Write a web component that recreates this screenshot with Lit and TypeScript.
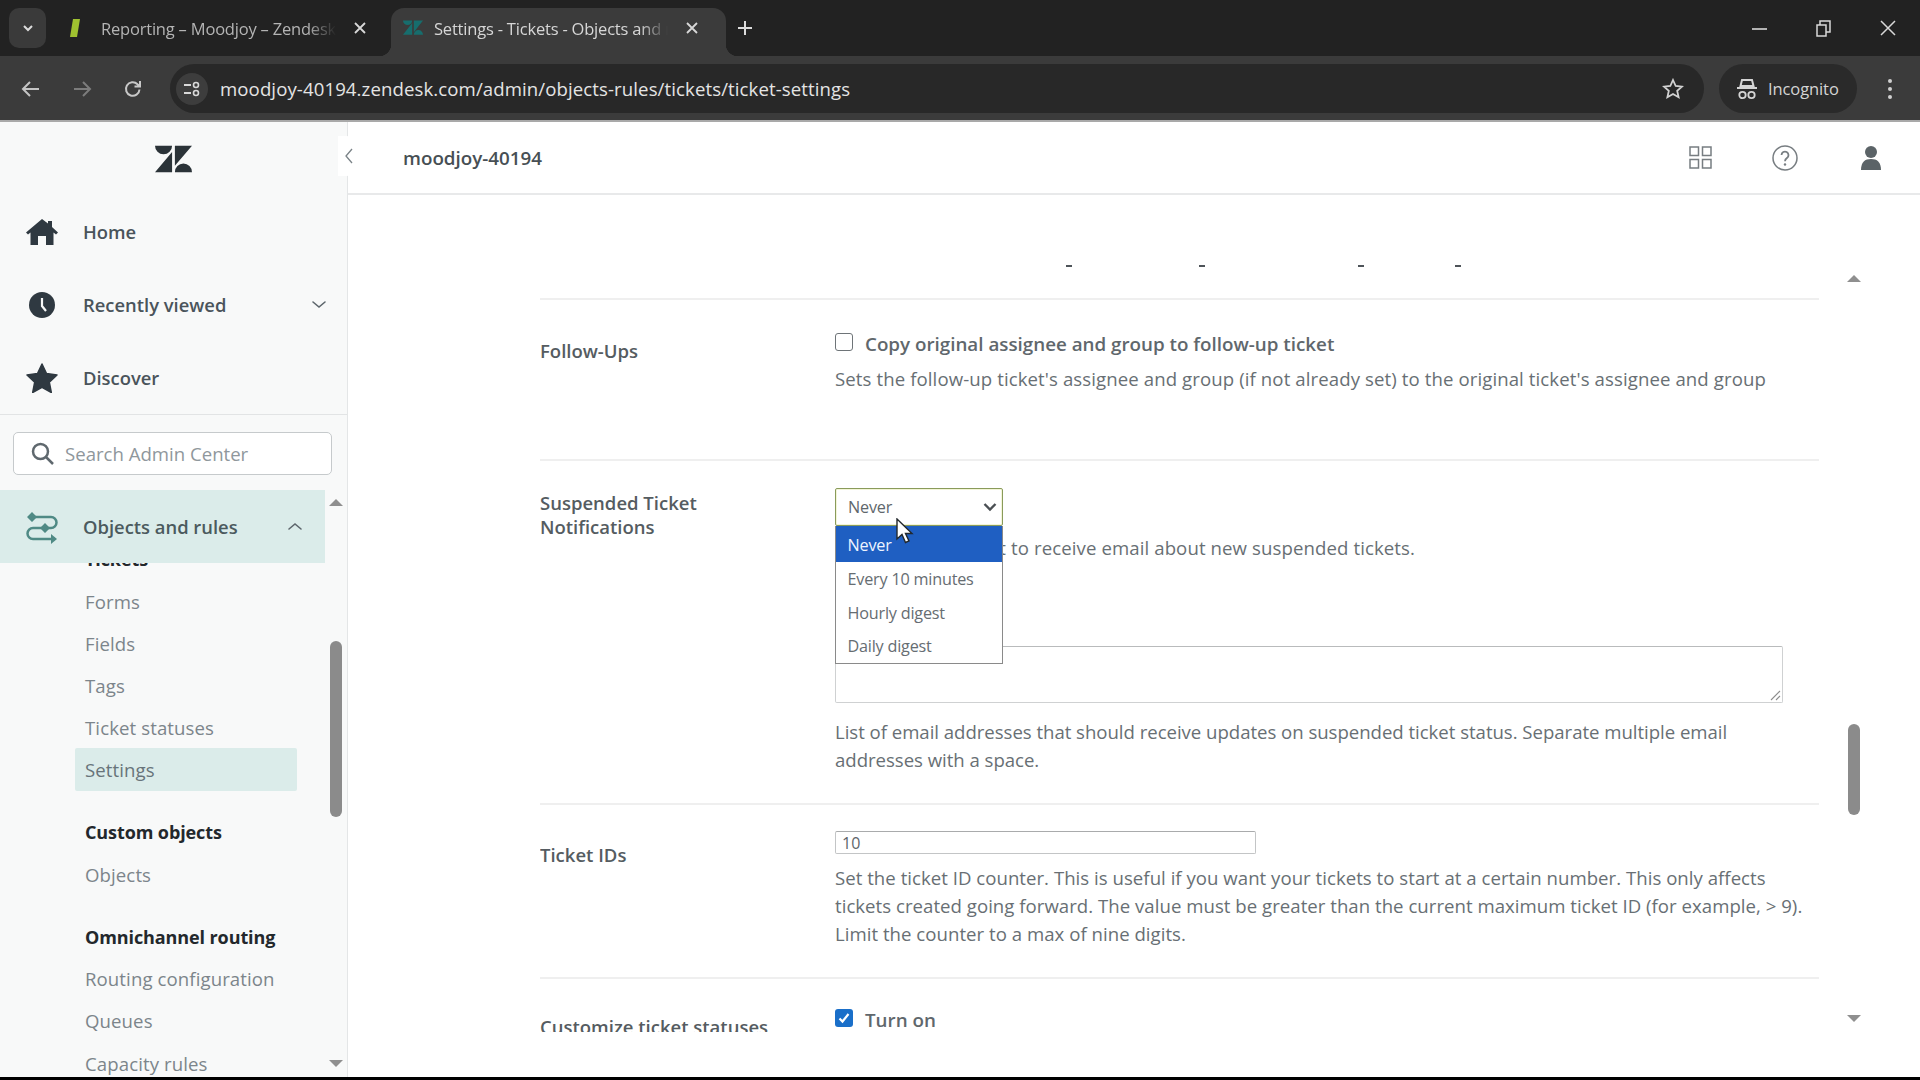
import { LitElement, html, css, svg } from 'lit';
import { customElement } from 'lit/decorators.js';

const chevronDown = svg`<path d="M3 6l6 5 6-5" fill="none" stroke="currentColor" stroke-width="1.6" stroke-linecap="round"/>`;
const chevronUp = svg`<path d="M3 11l6-5 6 5" fill="none" stroke="currentColor" stroke-width="1.6" stroke-linecap="round"/>`;

@customElement('app-root')
export class AppRoot extends LitElement {
  static styles = css`
    :host {
      display: block;
      width: 1920px;
      height: 1080px;
      overflow: hidden;
      background: #000;
      font-family: 'Open Sans', 'Noto Sans', sans-serif;
      color: #5a6268;
    }
    svg { display: block; flex: none; }

    /* browser chrome */
    .tabstrip {
      height: 56px;
      background: #222222;
      display: flex;
      align-items: flex-end;
      box-sizing: border-box;
      color: #dcdcdc;
    }
    .tabs-btn {
      width: 37px;
      height: 40px;
      margin: 0 0 8px 9px;
      background: #3a3a3a;
      border-radius: 10px;
      display: flex;
      align-items: center;
      justify-content: center;
    }
    .tab {
      height: 48px;
      display: flex;
      align-items: center;
      position: relative;
      box-sizing: border-box;
      padding-bottom: 8px;
      font-size: 16.5px;
      letter-spacing: -0.2px;
    }
    .tab.first { width: 344px; margin-left: 1px; padding-left: 22px; color: #b4b4b4; }
    .tab.active { width: 335px; padding-left: 12px; background: #3b3b3b; border-radius: 13px 13px 0 0; color: #d6d6d6; }
    .tab.active::before, .tab.active::after {
      content: '';
      position: absolute;
      bottom: 0;
      width: 12px;
      height: 12px;
    }
    .tab.active::before { left: -12px; background: radial-gradient(circle at 0 0, #222222 12px, #3b3b3b 12.5px); }
    .tab.active::after { right: -12px; background: radial-gradient(circle at 100% 0, #222222 12px, #3b3b3b 12.5px); }
    .tab .title {
      overflow: hidden;
      white-space: nowrap;
      -webkit-mask-image: linear-gradient(to right, #000 88%, transparent);
      mask-image: linear-gradient(to right, #000 88%, transparent);
    }
    .tab.first .title { width: 235px; margin-left: 20px; }
    .tab.active .title { width: 234px; margin-left: 11px; }
    .tab .close { margin-left: 17px; color: #d8d8d8; }
    .plus { margin: 0 0 20px 11px; color: #dcdcdc; }
    .window-controls { margin-left: auto; display: flex; align-items: center; height: 56px; padding-right: 24px; gap: 49px; color: #d8d8d8; }
    .toolbar {
      height: 66px;
      background: #3b3b3b;
      border-bottom: 2px solid #a9a9a9;
      box-sizing: border-box;
      display: flex;
      align-items: flex-start;
      padding-top: 8px;
      color: #c8c8c8;
    }
    .nav-btns { display: flex; align-items: center; height: 49px; gap: 31px; padding-left: 21px; width: 170px; box-sizing: border-box; }
    .omnibox {
      width: 1534px;
      height: 49px;
      background: #282828;
      border-radius: 25px;
      display: flex;
      align-items: center;
      box-sizing: border-box;
      padding-left: 6px;
      color: #e4e4e4;
    }
    .site-icon { width: 32px; height: 32px; border-radius: 16px; background: #3d3d3d; display: flex; align-items: center; justify-content: center; margin-right: 12px; }
    .url { font-size: 18.6px; letter-spacing: 0.1px; white-space: nowrap; }
    .url-star { margin-left: auto; margin-right: 20px; color: #d2d2d2; }
    .incognito {
      width: 138px;
      height: 49px;
      margin-left: 15px;
      border-radius: 25px;
      background: #2a2a2a;
      display: flex;
      align-items: center;
      padding-left: 18px;
      box-sizing: border-box;
      gap: 11px;
      font-size: 16.5px;
      letter-spacing: -0.1px;
      color: #d4d4d4;
    }
    .menu-dots { margin-left: 30px; height: 49px; display: flex; align-items: center; color: #d0d0d0; }

    /* page */
    .page { display: flex; height: 955px; background: #fff; }
    .sidebar {
      width: 348px;
      flex: none;
      background: #f8f9f9;
      border-right: 1px solid #e4e6e7;
      box-sizing: border-box;
      display: flex;
      flex-direction: column;
    }
    .logo-row { height: 73px; display: flex; align-items: center; justify-content: center; padding: 1px 1px 0 0; box-sizing: border-box; }
    .nav-item {
      height: 73px;
      display: flex;
      align-items: center;
      padding-left: 26px;
      padding-right: 19px;
      font-size: 18.4px;
      font-weight: 600;
      color: #4a545b;
      box-sizing: border-box;
    }
    .nav-item .label { margin-left: 25px; }
    .nav-item .caret { margin-left: auto; color: #5d666c; }
    .divider { height: 1px; background: #e2e4e5; }
    .search-wrap { padding: 17px 15px 15px 13px; }
    .search {
      height: 43px;
      background: #fff;
      border: 1.5px solid #c6cacc;
      border-radius: 5px;
      box-sizing: border-box;
      display: flex;
      align-items: center;
      padding-left: 17px;
      gap: 11px;
      font-size: 18.6px;
      color: #8f979c;
    }
    .side-lower { flex: 1; display: flex; min-height: 0; }
    .side-col { width: 325px; flex: none; display: flex; flex-direction: column; min-height: 0; }
    .nav-item.current { height: 73px; background: #dbecea; padding-right: 21px; color: #4b5a5e; flex: none; }
    .sublist { flex: 1; overflow: hidden; min-height: 0; }
    .subinner { margin-top: -25px; padding-left: 75px; }
    .sub {
      height: 42.1px;
      width: 222px;
      display: flex;
      align-items: center;
      padding-left: 10px;
      box-sizing: border-box;
      font-size: 18.6px;
      letter-spacing: 0.1px;
      color: #7c858b;
      border-radius: 2px;
    }
    .sub.head { font-size: 18px; font-weight: 700; color: #23282c; letter-spacing: -0.1px; }
    .sub.on { background: #dbecea; color: #68747a; }
    .sub.gap { margin-top: 20.5px; }
    .side-scroll { width: 22px; display: flex; flex-direction: column; align-items: center; box-sizing: border-box; }
    .thumb { width: 12px; background: #8b8b8b; border-radius: 6px; }
    .arrow-up { width: 0; height: 0; border-left: 7px solid transparent; border-right: 7px solid transparent; border-bottom: 7px solid #8f8f8f; }
    .arrow-down { width: 0; height: 0; border-left: 7px solid transparent; border-right: 7px solid transparent; border-top: 7px solid #8f8f8f; }

    .main { flex: 1; display: flex; flex-direction: column; min-width: 0; position: relative; }
    .collapse {
      position: absolute;
      left: -10px;
      top: 14px;
      width: 22px;
      height: 40px;
      border-radius: 0 14px 14px 0;
      background: #fff;
      display: flex;
      align-items: center;
      justify-content: center;
      color: #7a8287;
    }
    .topbar {
      height: 73px;
      border-bottom: 2px solid #e8e9ea;
      box-sizing: border-box;
      display: flex;
      align-items: center;
      padding-left: 55px;
      color: #777d81;
    }
    .brand { font-size: 18.8px; font-weight: 600; color: #474f54; }
    .top-icons { margin-left: auto; display: flex; align-items: center; gap: 60px; padding-right: 38px; }
    .top-icons .user { margin-left: 2px; }
    .content { flex: 1; display: flex; padding: 70px 0 0 192px; min-height: 0; }
    .form { width: 1279px; height: 767px; overflow: hidden; flex: none; }
    .row {
      display: grid;
      grid-template-columns: 295px 1fr;
      border-top: 2px solid #efefef;
      box-sizing: border-box;
    }
    .clipped-line { height: 33px; display: flex; align-items: flex-start; }
    .clipped-line i { display: block; width: 6px; height: 2px; background: #4e5459; }
    .row-label { font-size: 18.5px; font-weight: 600; line-height: 24px; color: #555c61; }
    .desc { font-size: 18.6px; line-height: 28px; letter-spacing: 0.1px; color: #686f74; white-space: nowrap; margin: 0; }
    .check-line { display: flex; align-items: center; height: 24px; gap: 12px; font-size: 18.8px; font-weight: 600; color: #60676c; }
    .box { width: 18px; height: 18px; border: 1.5px solid #6e7478; border-radius: 3px; box-sizing: border-box; background: #fff; flex: none; margin-top: -4px; }
    .box.on { background: #1a6fc9; border: none; display: flex; align-items: center; justify-content: center; }

    .follow { padding: 32px 0 0; height: 161px; }
    .follow .row-label { margin-top: 7px; }
    .follow .desc { margin-top: 9px; }
    .suspended { padding: 27px 0 29px; }
    .suspended .row-label { margin-top: 3px; }
    .select-wrap { position: relative; width: 168px; height: 38px; }
    .select {
      height: 38px;
      border: 1.5px solid #8a9b5a;
      box-shadow: 0 0 0 1px #f3f5d8 inset;
      border-radius: 2px;
      box-sizing: border-box;
      display: flex;
      align-items: center;
      justify-content: space-between;
      padding: 0 5px 0 12px;
      font-size: 16.2px;
      letter-spacing: -0.2px;
      color: #60676c;
      background: #fff;
    }
    .options {
      position: absolute;
      left: 0;
      top: 38px;
      width: 168px;
      height: 138px;
      border: 1px solid #8a8a8a;
      border-top: none;
      box-sizing: border-box;
      background: #fff;
      z-index: 2;
      font-size: 16.2px;
      letter-spacing: -0.2px;
      color: #666d72;
    }
    .option { height: 33.7px; display: flex; align-items: center; padding-left: 11.5px; }
    .option.selected { height: 36px; padding-top: 1px; box-sizing: border-box; background: #1f5fc2; color: #eef4ff; }
    .cursor { position: absolute; left: 61px; top: 30px; z-index: 3; }
    .suspended .desc.first { margin-top: 8px; }
    .textarea {
      margin: 84px 0 0;
      width: 948px;
      height: 57px;
      border: 1.5px solid #cfd1d2;
      border-top-color: #b9bbbc;
      border-radius: 2px;
      box-sizing: border-box;
      display: flex;
      align-items: flex-end;
      justify-content: flex-end;
      padding: 0 1px 1px 0;
      color: #8d8d8d;
    }
    .suspended .desc.last { margin-top: 15px; letter-spacing: -0.03px; }
    .ids { padding: 26px 0 29px; }
    .ids .row-label { margin-top: 12px; }
    .input {
      width: 421px;
      height: 23px;
      border: 1.5px solid #c3c5c6;
      border-top-color: #a9abac;
      border-radius: 2px;
      box-sizing: border-box;
      display: flex;
      align-items: center;
      padding-left: 6px;
      font-size: 16px;
      color: #5e656a;
    }
    .ids .desc { margin-top: 10px; letter-spacing: 0.03px; }
    .statuses { padding: 29px 0 0; }
    .statuses .row-label { margin-top: 7px; }
    .scroll-col { margin-left: 29px; width: 12px; display: flex; flex-direction: column; align-items: center; }
  `;

  private subItem(label: string, cls = '') {
    return html`<div class="sub ${cls}">${label}</div>`;
  }

  render() {
    return html`
      <div class="tabstrip">
        <div class="tabs-btn">
          <svg width="14" height="14" viewBox="0 0 14 14"><path d="M3 5l4 4 4-4" fill="none" stroke="#dcdcdc" stroke-width="2"/></svg>
        </div>
        <div class="tab first">
          <svg width="12" height="20" viewBox="0 0 12 20"><path d="M4 1h7L8 19H1z" fill="#9fc130"/></svg>
          <span class="title">Reporting – Moodjoy – Zendesk</span>
          <svg class="close" width="14" height="14" viewBox="0 0 14 14"><path d="M2 2l10 10M12 2L2 12" stroke="currentColor" stroke-width="1.8"/></svg>
        </div>
        <div class="tab active">
          <svg width="20" height="18" viewBox="0 0 24 20"><path d="M11 4v14H0zM11 1a5.500 5.500 0 0 1-11 0zM13 18a5.500 5.500 0 0 1 11 0zM13 15V1h11z" fill="#176d6d"/></svg>
          <span class="title">Settings - Tickets - Objects and rules</span>
          <svg class="close" width="14" height="14" viewBox="0 0 14 14"><path d="M2 2l10 10M12 2L2 12" stroke="currentColor" stroke-width="1.8"/></svg>
        </div>
        <svg class="plus" width="16" height="16" viewBox="0 0 16 16"><path d="M8 1v14M1 8h14" stroke="currentColor" stroke-width="2"/></svg>
        <div class="window-controls">
          <svg width="15" height="15" viewBox="0 0 15 15"><path d="M0 8h15" stroke="currentColor" stroke-width="1.6"/></svg>
          <svg width="15" height="17" viewBox="0 0 15 17"><path d="M1 5h9v11H1zM4 5V1h10v11h-4" fill="none" stroke="currentColor" stroke-width="1.5"/></svg>
          <svg width="16" height="16" viewBox="0 0 16 16"><path d="M1 1l14 14M15 1L1 15" stroke="currentColor" stroke-width="1.5"/></svg>
        </div>
      </div>
      <div class="toolbar">
        <div class="nav-btns">
          <svg width="20" height="20" viewBox="0 0 20 20"><path d="M18 10H3M9 3l-7 7 7 7" fill="none" stroke="#c4c4c4" stroke-width="2"/></svg>
          <svg width="20" height="20" viewBox="0 0 20 20"><path d="M2 10h15M11 3l7 7-7 7" fill="none" stroke="#7c7c7c" stroke-width="2"/></svg>
          <svg width="20" height="20" viewBox="0 0 20 20"><path d="M16.500 10.500a6.800 6.800 0 1 1-2-5.300L17 7.500M17 2v5.500h-5.500" fill="none" stroke="#c8c8c8" stroke-width="2"/></svg>
        </div>
        <div class="omnibox">
          <div class="site-icon">
            <svg width="18" height="18" viewBox="0 0 18 18"><path d="M1 5h7M1 13h7" stroke="#d8d8d8" stroke-width="2"/><circle cx="13" cy="5" r="2.500" fill="none" stroke="#d8d8d8" stroke-width="1.600"/><circle cx="13" cy="13" r="2.500" fill="none" stroke="#d8d8d8" stroke-width="1.600"/></svg>
          </div>
          <span class="url">moodjoy-40194.zendesk.com/admin/objects-rules/tickets/ticket-settings</span>
          <svg class="url-star" width="22" height="22" viewBox="0 0 22 22"><path d="M11 2l2.700 6 6.300.6-4.800 4.300 1.400 6.400L11 16l-5.600 3.300 1.400-6.400L2 8.600 8.300 8z" fill="none" stroke="currentColor" stroke-width="1.800"/></svg>
        </div>
        <div class="incognito">
          <svg width="20" height="22" viewBox="0 0 20 22"><path d="M5 2h10l1.500 6h-13zM0 10h20" fill="none" stroke="#d4d4d4" stroke-width="2"/><circle cx="5.500" cy="17" r="3.200" fill="none" stroke="#d4d4d4" stroke-width="1.800"/><circle cx="14.500" cy="17" r="3.200" fill="none" stroke="#d4d4d4" stroke-width="1.800"/></svg>
          <span>Incognito</span>
        </div>
        <div class="menu-dots">
          <svg width="6" height="22" viewBox="0 0 6 22"><circle cx="3" cy="3" r="2" fill="currentColor"/><circle cx="3" cy="11" r="2" fill="currentColor"/><circle cx="3" cy="19" r="2" fill="currentColor"/></svg>
        </div>
      </div>
      <div class="page">
        <aside class="sidebar">
          <div class="logo-row">
            <svg width="37" height="29" viewBox="0 0 24 18"><path d="M11.080 4.100V17.200L0 17.200zM11.080 0a5.540 5.540 0 0 1-11.080 0zM12.900 17.200a5.540 5.540 0 0 1 11.080 0zM12.900 13.100V0H24z" fill="#2b3338"/></svg>
          </div>
          <div class="nav-item">
            <svg width="32" height="26" viewBox="0 0 32 26"><path d="M16 0L0 13.500l2 2 2.500-2V26H12v-9h8v9h7.500V13.500l2.500 2 2-2L26 8V2h-4v2.500z" fill="#2f3941"/></svg>
            <span class="label">Home</span>
          </div>
          <div class="nav-item">
            <svg width="32" height="26" viewBox="-3 0 32 26"><circle cx="13" cy="13" r="13" fill="#2f3941"/><path d="M13 6v8l4 5" fill="none" stroke="#f8f9f9" stroke-width="2.200"/></svg>
            <span class="label">Recently viewed</span>
            <svg class="caret" width="18" height="18" viewBox="0 0 18 18">${chevronDown}</svg>
          </div>
          <div class="nav-item">
            <svg width="32" height="30" viewBox="0 0 32 30"><path d="M16 1l4.500 9.600 10.500 1.300-7.700 7.200 2 10.400L16 24.400 6.700 29.500l2-10.400L1 11.900l10.500-1.300z" fill="#2f3941" stroke="#2f3941" stroke-linejoin="round" stroke-width="1.500"/></svg>
            <span class="label">Discover</span>
          </div>
          <div class="divider"></div>
          <div class="search-wrap">
            <div class="search">
              <svg width="23" height="23" viewBox="0 0 23 23"><circle cx="9.500" cy="9.500" r="7.500" fill="none" stroke="#5f686e" stroke-width="2.500"/><path d="M15 15l7 7" stroke="#5f686e" stroke-width="2.500"/></svg>
              <span>Search Admin Center</span>
            </div>
          </div>
          <div class="side-lower">
            <div class="side-col">
              <div class="nav-item current">
                <svg width="32" height="34" viewBox="0 0 32 34"><path d="M5 7h20a5.500 5.500 0 0 1 0 11H7a5.500 5.500 0 0 0 0 11h22" fill="none" stroke="#4f8a85" stroke-width="2.500"/><path d="M1 7l5-5 5 5-5 5zM14 18l5-5 5 5-5 5z" fill="#4f8a85"/><path d="M25 24l6 5-6 5z" fill="#4f8a85"/></svg>
                <span class="label">Objects and rules</span>
                <svg class="caret" width="18" height="18" viewBox="0 0 18 18">${chevronUp}</svg>
              </div>
              <div class="sublist">
                <div class="subinner">
                  ${this.subItem('Tickets', 'head')}
                  ${this.subItem('Forms')}
                  ${this.subItem('Fields')}
                  ${this.subItem('Tags')}
                  ${this.subItem('Ticket statuses')}
                  ${this.subItem('Settings', 'on')}
                  ${this.subItem('Custom objects', 'head gap')}
                  ${this.subItem('Objects')}
                  ${this.subItem('Omnichannel routing', 'head gap')}
                  ${this.subItem('Routing configuration')}
                  ${this.subItem('Queues')}
                  ${this.subItem('Capacity rules')}
                </div>
              </div>
            </div>
            <div class="side-scroll">
              <div class="arrow-up" style="margin-top:9px"></div>
              <div class="thumb" style="margin-top:135px;height:176px"></div>
              <div class="arrow-down" style="margin-top:243px"></div>
            </div>
          </div>
        </aside>
        <main class="main">
          <div class="collapse">
            <svg width="10" height="18" viewBox="0 0 10 18"><path d="M8 2L2 9l6 7" fill="none" stroke="currentColor" stroke-width="1.300"/></svg>
          </div>
          <div class="topbar">
            <span class="brand">moodjoy-40194</span>
            <div class="top-icons">
              <svg width="23" height="23" viewBox="0 0 23 23"><path d="M1 1h8.500v8.500H1zM13.500 1H22v8.500h-8.500zM1 13.500h8.500V22H1zM13.500 13.500H22V22h-8.500z" fill="none" stroke="currentColor" stroke-width="1.500"/></svg>
              <svg width="26" height="26" viewBox="0 0 26 26"><circle cx="13" cy="13" r="12" fill="none" stroke="currentColor" stroke-width="1.500"/><path d="M9.500 10a3.500 3.500 0 1 1 5.500 3c-1.300 1-2 1.500-2 3.200" fill="none" stroke="currentColor" stroke-width="1.800"/><circle cx="13" cy="19.500" r="1.200" fill="currentColor"/></svg>
              <svg class="user" width="22" height="24" viewBox="0 0 22 24"><circle cx="11" cy="6" r="6" fill="#5b6367"/><path d="M1 24c0-8 4-11 10-11s10 3 10 11z" fill="#5b6367"/></svg>
            </div>
          </div>
          <div class="content">
            <div class="form">
              <div class="clipped-line">
                <i style="margin-left:526px"></i><i style="margin-left:127px"></i><i style="margin-left:153px"></i><i style="margin-left:91px"></i>
              </div>
              <div class="row follow">
                <div class="row-label">Follow-Ups</div>
                <div>
                  <div class="check-line"><span class="box"></span>Copy original assignee and group to follow-up ticket</div>
                  <p class="desc">Sets the follow-up ticket's assignee and group (if not already set) to the original ticket's assignee and group</p>
                </div>
              </div>
              <div class="row suspended">
                <div class="row-label">Suspended Ticket<br />Notifications</div>
                <div>
                  <div class="select-wrap">
                    <div class="select">
                      <span>Never</span>
                      <svg width="14" height="10" viewBox="0 0 14 10"><path d="M1.500 2l5.500 5.500L12.500 2" fill="none" stroke="#4a4f53" stroke-width="2.400"/></svg>
                    </div>
                    <div class="options">
                      <div class="option selected">Never</div>
                      <div class="option">Every 10 minutes</div>
                      <div class="option">Hourly digest</div>
                      <div class="option">Daily digest</div>
                    </div>
                    <svg class="cursor" width="18" height="26" viewBox="0 0 18 26"><path d="M1 1v20l5-4.500 3.500 8 3.500-1.500-3.500-7.500H16z" fill="#fff" stroke="#22282c" stroke-width="1.400"/></svg>
                  </div>
                  <p class="desc first">Indicate if you want to receive email about new suspended tickets.</p>
                  <div class="textarea">
                    <svg width="12" height="12" viewBox="0 0 12 12"><path d="M11 2L2 11M11 7l-4 4" stroke="currentColor" stroke-width="1.100"/></svg>
                  </div>
                  <p class="desc last">List of email addresses that should receive updates on suspended ticket status. Separate multiple email<br />addresses with a space.</p>
                </div>
              </div>
              <div class="row ids">
                <div class="row-label">Ticket IDs</div>
                <div>
                  <div class="input">10</div>
                  <p class="desc">Set the ticket ID counter. This is useful if you want your tickets to start at a certain number. This only affects<br />tickets created going forward. The value must be greater than the current maximum ticket ID (for example, &gt; 9).<br />Limit the counter to a max of nine digits.</p>
                </div>
              </div>
              <div class="row statuses">
                <div class="row-label">Customize ticket statuses</div>
                <div>
                  <div class="check-line">
                    <span class="box on"><svg width="14" height="14" viewBox="0 0 14 14"><path d="M2.500 7.500l3 3 6-7.500" fill="none" stroke="#fff" stroke-width="2.200"/></svg></span>
                    Turn on
                  </div>
                </div>
              </div>
            </div>
            <div class="scroll-col">
              <div class="arrow-up" style="margin-top:10px"></div>
              <div class="thumb" style="margin-top:442px;height:91px"></div>
              <div class="arrow-down" style="margin-top:200px"></div>
            </div>
          </div>
        </main>
      </div>
    `;
  }
}
